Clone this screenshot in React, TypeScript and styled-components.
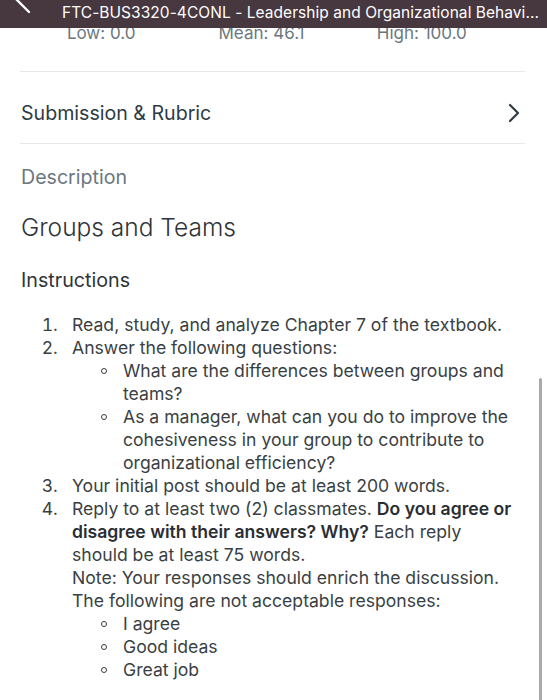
import React from "react";
import styled, { createGlobalStyle } from "styled-components";

const Global = createGlobalStyle`
  html, body { margin: 0; padding: 0; background: #fff; overflow: hidden; }
  body { font-family: Inter, "Noto Sans", "Liberation Sans", sans-serif; -webkit-font-smoothing: antialiased; }
`;

const Page = styled.div`
  position: relative;
  width: 547px;
  height: 700px;
  overflow: hidden;
  background: #fff;
`;

const Header = styled.header`
  position: sticky;
  top: 0;
  z-index: 2;
  height: 28px;
  background: #47373f;
  display: flex;
  align-items: flex-start;
  overflow: hidden;
`;

const Back = styled.div`
  width: 62px;
  flex: none;
  margin-top: -14px;
  padding-left: 13px;
  box-sizing: border-box;
`;

const Subtitle = styled.div`
  color: #fff;
  font-size: 15.5px;
  line-height: 18px;
  margin-top: 4px;
  white-space: nowrap;
  letter-spacing: 0.05px;
`;

const Stats = styled.div`
  display: grid;
  grid-template-columns: 1fr 1fr 1fr;
  padding: 0 45px 0 21px;
  margin-top: -6px;
  height: 22px;
  align-items: center;
`;

const Stat = styled.div`
  text-align: center;
  color: #6b7780;
  font-size: 17px;
  line-height: 22px;
`;

const Spacer = styled.div<{ h: number }>`
  height: ${(p) => p.h}px;
`;

const Divider = styled.hr`
  border: none;
  border-top: 1px solid #e6e8ea;
  margin: 0 22px 0 20px;
`;

const Row = styled.div`
  display: flex;
  align-items: center;
  justify-content: space-between;
  padding: 28px 26px 17px 21px;
  height: 26px;
`;

const RowLabel = styled.div`
  color: #2d3b45;
  font-size: 19.6px;
  line-height: 26px;
`;

const Body = styled.div`
  padding: 0 27px 0 21px;
  color: #333a40;
`;

const SectionLabel = styled.div`
  color: #6b7780;
  font-size: 19.6px;
  line-height: 24px;
  margin-top: 21px;
`;

const Title = styled.h1`
  font-size: 24.5px;
  font-weight: 300;
  color: #2f3438;
  margin: 24px 0 0;
  line-height: 28px;
`;

const SubHead = styled.h2`
  font-size: 19.7px;
  font-weight: 400;
  color: #2f3438;
  margin: 27px 0 0;
  line-height: 24px;
`;

const OL = styled.ol`
  margin: 21px 0 0;
  padding-left: 51px;
  font-size: 17.6px;
  line-height: 23px;
  color: #3a3f44;
  & > li::marker {
    content: counter(list-item) ".\\00a0\\00a0\\00a0";
  }
`;

const UL = styled.ul`
  margin: 0;
  padding-left: 51px;
  list-style: none;
`;

const Bullet = styled.li`
  position: relative;
  &::before {
    content: "";
    position: absolute;
    left: -22px;
    top: 9px;
    width: 4px;
    height: 4px;
    border: 1.3px solid #3a3f44;
    border-radius: 50%;
  }
`;

const B = styled.b`
  font-weight: 600;
  color: #2a2e33;
`;

const Scrollbar = styled.div`
  position: absolute;
  right: 5px;
  top: 378px;
  width: 3px;
  height: 340px;
  border-radius: 2px;
  background: #a9a9a9;
`;

export default function App() {
  return (
    <Page>
      <Global />
      <Header>
        <Back>
          <svg width="22" height="30" viewBox="0 0 22 30">
            <polyline points="16,0 3,13 16,26" fill="none" stroke="#fff" strokeWidth="2.4" strokeLinecap="round" strokeLinejoin="round" />
          </svg>
        </Back>
        <Subtitle>FTC-BUS3320-4CONL - Leadership and Organizational Behavi...</Subtitle>
      </Header>
      <Stats>
        <Stat>Low: 0.0</Stat>
        <Stat>Mean: 46.1</Stat>
        <Stat>High: 100.0</Stat>
      </Stats>
      <Spacer h={27} />
      <Divider />
      <Row>
        <RowLabel>Submission &amp; Rubric</RowLabel>
        <svg width="14" height="20" viewBox="0 0 14 20">
          <polyline points="3,2 11,10 3,18" fill="none" stroke="#2d3b45" strokeWidth="2.2" strokeLinecap="round" strokeLinejoin="round" />
        </svg>
      </Row>
      <Divider />
      <Body>
        <SectionLabel>Description</SectionLabel>
        <Title>Groups and Teams</Title>
        <SubHead>Instructions</SubHead>
        <OL>
          <li>Read, study, and analyze Chapter 7 of the textbook.</li>
          <li>
            Answer the following questions:
            <UL>
              <Bullet>What are the differences between groups and teams?</Bullet>
              <Bullet>As a manager, what can you do to improve the cohesiveness in your group to contribute to organizational efficiency?</Bullet>
            </UL>
          </li>
          <li>Your initial post should be at least 200 words.</li>
          <li>
            Reply to at least two (2) classmates. <B>Do you agree or disagree with their answers? Why?</B> Each reply should be at least 75 words.
            <br />
            Note: Your responses should enrich the discussion. The following are not acceptable responses:
            <UL>
              <Bullet>I agree</Bullet>
              <Bullet>Good ideas</Bullet>
              <Bullet>Great job</Bullet>
            </UL>
          </li>
        </OL>
      </Body>
      <Scrollbar />
    </Page>
  );
}
